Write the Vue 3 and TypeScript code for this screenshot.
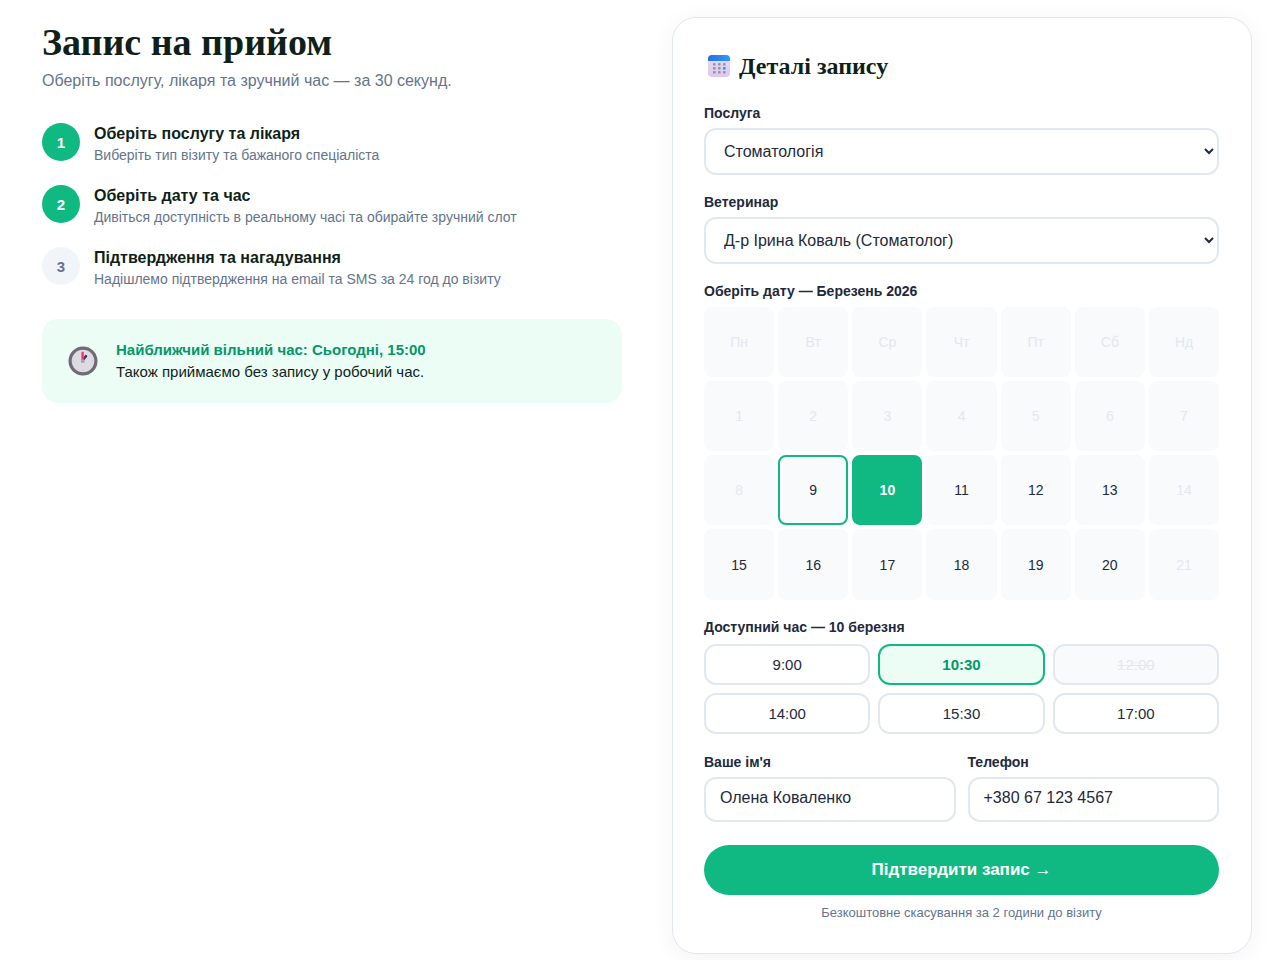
<script setup lang="ts">
import { ref } from 'vue'

interface Step {
  title: string
  text: string
  done: boolean
}

const steps: Step[] = [
  { title: 'Оберіть послугу та лікаря', text: 'Виберіть тип візиту та бажаного спеціаліста', done: true },
  { title: 'Оберіть дату та час', text: 'Дивіться доступність в реальному часі та обирайте зручний слот', done: true },
  { title: 'Підтвердження та нагадування', text: 'Надішлемо підтвердження на email та SMS за 24 год до візиту', done: false },
]

const weekdays: string[] = ['Пн', 'Вт', 'Ср', 'Чт', 'Пт', 'Сб', 'Нд']
const days: number[] = Array.from({ length: 21 }, (_, i) => i + 1)
const today = 9
const isClosed = (day: number): boolean => day < today || day % 7 === 0

const slots: { time: string; taken: boolean }[] = [
  { time: '9:00', taken: false },
  { time: '10:30', taken: false },
  { time: '12:00', taken: true },
  { time: '14:00', taken: false },
  { time: '15:30', taken: false },
  { time: '17:00', taken: false },
]

const dotColumns: number[] = [8, 13, 18]
const dotRows: number[] = [11, 15, 19]

const service = ref('Стоматологія')
const vet = ref('Д-р Ірина Коваль (Стоматолог)')
const selectedDay = ref(10)
const selectedTime = ref('10:30')
const name = ref("Олена Коваленко")
const phone = ref('+380 67 123 4567')
</script>

<template>
  <main class="page">
    <section class="intro">
      <h1>Запис на прийом</h1>
      <p class="lead">Оберіть послугу, лікаря та зручний час — за 30 секунд.</p>

      <ol class="steps">
        <li v-for="(step, i) in steps" :key="step.title" class="step">
          <span class="badge" :class="{ done: step.done }">{{ i + 1 }}</span>
          <div>
            <h3>{{ step.title }}</h3>
            <p>{{ step.text }}</p>
          </div>
        </li>
      </ol>

      <div class="notice">
        <svg class="clock" viewBox="0 0 30 30" aria-hidden="true">
          <circle cx="15" cy="15" r="14.5" fill="#6f6a73" />
          <circle cx="15" cy="15" r="11.3" fill="#dedae3" />
          <path d="M15 4.8v1.4M15 23.8v1.4M4.8 15h1.4M23.8 15h1.4" stroke="#c4bfca" stroke-width="1" />
          <path d="M15.2 13.5 18 10.2" stroke="#42345f" stroke-width="2.6" stroke-linecap="round" />
          <path d="M14.6 14V7" stroke="#f0386b" stroke-width="2.4" stroke-linecap="round" />
          <circle cx="14.8" cy="15.2" r="1.9" fill="#aaa6ae" />
        </svg>
        <div>
          <strong>Найближчий вільний час: Сьогодні, 15:00</strong>
          <p>Також приймаємо без запису у робочий час.</p>
        </div>
      </div>
    </section>

    <form class="card" @submit.prevent>
      <h2>
        <svg class="calendar-icon" viewBox="0 0 26 26" aria-hidden="true">
          <defs>
            <linearGradient id="cal-head" x1="0" y1="0" x2="1" y2="0">
              <stop offset="0" stop-color="#2a6de4" />
              <stop offset="1" stop-color="#2f9bfb" />
            </linearGradient>
            <linearGradient id="cal-body" x1="0" y1="0" x2="0" y2="1">
              <stop offset="0" stop-color="#e6dff0" />
              <stop offset="1" stop-color="#dcc8ee" />
            </linearGradient>
          </defs>
          <rect x="2" y="2" width="22" height="22" rx="4" fill="url(#cal-body)" />
          <path d="M2 8V6a4 4 0 0 1 4-4h14a4 4 0 0 1 4 4v2z" fill="url(#cal-head)" />
          <template v-for="y in dotRows" :key="y">
            <rect
              v-for="x in dotColumns"
              :key="x"
              :x="x - 1"
              :y="y - 1"
              width="2.6"
              height="2.6"
              rx="0.7"
              :fill="x === 18 && y === 15 ? '#2492f5' : '#9b8fab'"
            />
          </template>
        </svg>
        <span>Деталі запису</span>
      </h2>

      <div class="field">
        <label for="service">Послуга</label>
        <select id="service" v-model="service">
          <option>Стоматологія</option>
        </select>
      </div>

      <div class="field">
        <label for="vet">Ветеринар</label>
        <select id="vet" v-model="vet">
          <option>Д-р Ірина Коваль (Стоматолог)</option>
        </select>
      </div>

      <div class="field" role="group" aria-labelledby="date-label">
        <span id="date-label" class="label">Оберіть дату — Березень 2026</span>
        <div class="calendar">
          <span v-for="w in weekdays" :key="w" class="day closed">{{ w }}</span>
          <button
            v-for="d in days"
            :key="d"
            type="button"
            class="day"
            :class="{ closed: isClosed(d), today: d === today, selected: d === selectedDay }"
            :disabled="isClosed(d)"
            @click="selectedDay = d"
          >
            {{ d }}
          </button>
        </div>
      </div>

      <div class="field" role="group" aria-labelledby="time-label">
        <span id="time-label" class="label">Доступний час — {{ selectedDay }} березня</span>
        <div class="slots">
          <button
            v-for="s in slots"
            :key="s.time"
            type="button"
            class="slot"
            :class="{ selected: s.time === selectedTime }"
            :disabled="s.taken"
            @click="selectedTime = s.time"
          >
            {{ s.time }}
          </button>
        </div>
      </div>

      <div class="contacts">
        <div class="field">
          <label for="name">Ваше ім'я</label>
          <input id="name" v-model="name" type="text" />
        </div>
        <div class="field">
          <label for="phone">Телефон</label>
          <input id="phone" v-model="phone" type="tel" />
        </div>
      </div>

      <button type="submit" class="submit">Підтвердити запис <span class="arrow">→</span></button>
      <p class="note">Безкоштовне скасування за 2 години до візиту</p>
    </form>
  </main>
</template>

<style>
body {
  margin: 0;
  background: #ffffff;
}
</style>

<style scoped>
* {
  box-sizing: border-box;
}

.page {
  display: grid;
  grid-template-columns: 1fr 1fr;
  align-items: start;
  gap: 50px;
  padding: 17px 28px 6px 42px;
  font-family: "Liberation Sans", Arial, sans-serif;
  font-size: 15px;
  color: #0f1f1a;
}

h1,
h2,
h3,
p {
  margin: 0;
}

h1,
h2 {
  font-family: "Liberation Serif", "Times New Roman", serif;
  font-weight: 700;
}

h1 {
  padding-top: 2px;
  font-size: 38px;
  line-height: 46px;
}

.lead {
  margin-top: 3px;
  font-size: 16px;
  line-height: 26px;
  color: #64748b;
}

.steps {
  display: flex;
  flex-direction: column;
  gap: 18px;
  margin: 27px 0 30px;
  padding: 0;
  list-style: none;
}

.step {
  display: flex;
  gap: 14px;
}

.badge {
  display: flex;
  flex: none;
  align-items: center;
  justify-content: center;
  width: 38px;
  height: 38px;
  margin-top: 2px;
  border-radius: 50%;
  background: #f1f5f9;
  font-weight: 700;
  color: #64748b;
}

.badge.done {
  background: #10b981;
  color: #ffffff;
}

.step h3 {
  font-size: 16px;
  line-height: 25px;
}

.step p {
  font-size: 14px;
  line-height: 19px;
  color: #64748b;
}

.notice {
  display: flex;
  align-items: center;
  gap: 18px;
  padding: 20px 26px;
  border-radius: 16px;
  background: #ecfdf5;
  line-height: 22px;
}

.notice strong {
  color: #059669;
}

.clock {
  flex: none;
  width: 30px;
  height: 30px;
}

.card {
  padding: 32px 32px 30px 31px;
  border: 1px solid #e2e8f0;
  border-radius: 24px;
  background: #ffffff;
  box-shadow: 0 4px 24px rgba(0, 0, 0, 0.05);
}

h2 {
  display: flex;
  align-items: center;
  gap: 7px;
  margin-bottom: 22px;
  padding-left: 2px;
  font-size: 24px;
  line-height: 32px;
}

.calendar-icon {
  width: 26px;
  height: 26px;
}

.field {
  display: flex;
  flex-direction: column;
  gap: 6px;
  min-width: 0;
  margin-bottom: 18px;
}

label,
.label {
  font-size: 14px;
  font-weight: 700;
  line-height: 18px;
  color: #1e293b;
}

select,
input {
  width: 100%;
  height: 47px;
  padding: 0 14px;
  border: 2px solid #e2e8f0;
  border-radius: 12px;
  background: #ffffff;
  font-family: inherit;
  font-size: 16px;
  color: #1e293b;
}

input {
  height: 45px;
  padding-bottom: 2px;
}

.calendar {
  display: grid;
  grid-template-columns: repeat(7, 1fr);
  gap: 4px;
  margin-top: 1px;
}

.day {
  display: flex;
  align-items: center;
  justify-content: center;
  aspect-ratio: 1;
  padding: 0;
  border: 2px solid transparent;
  border-radius: 8px;
  background: #f8fafc;
  font-family: inherit;
  font-size: 14px;
  color: #1e293b;
}

.day.closed {
  color: #e2e8f0;
}

.day.today {
  border-color: #10b981;
}

.day.selected {
  border-color: #10b981;
  background: #10b981;
  font-weight: 700;
  color: #ffffff;
}

.slots {
  display: grid;
  grid-template-columns: repeat(3, 1fr);
  gap: 8px;
  margin: 2px 0 1px;
}

.slot {
  height: 41px;
  border: 2px solid #e2e8f0;
  border-radius: 12px;
  background: #ffffff;
  font-family: inherit;
  font-size: 15px;
  color: #1e293b;
}

.slot.selected {
  border-color: #10b981;
  background: #ecfdf5;
  font-weight: 700;
  color: #059669;
}

.slot:disabled {
  background: #f8fafc;
  color: #e2e8f0;
  text-decoration: line-through;
}

.contacts {
  display: grid;
  grid-template-columns: 1fr 1fr;
  gap: 12px;
}

.submit {
  width: 100%;
  height: 50px;
  margin-top: 5px;
  border: 0;
  border-radius: 25px;
  background: #10b981;
  font-family: inherit;
  font-size: 17px;
  font-weight: 700;
  color: #ffffff;
}

.arrow {
  font-family: "Liberation Serif", serif;
  font-weight: 400;
}

.note {
  margin-top: 8px;
  font-size: 13px;
  line-height: 20px;
  text-align: center;
  color: #64748b;
}
</style>
